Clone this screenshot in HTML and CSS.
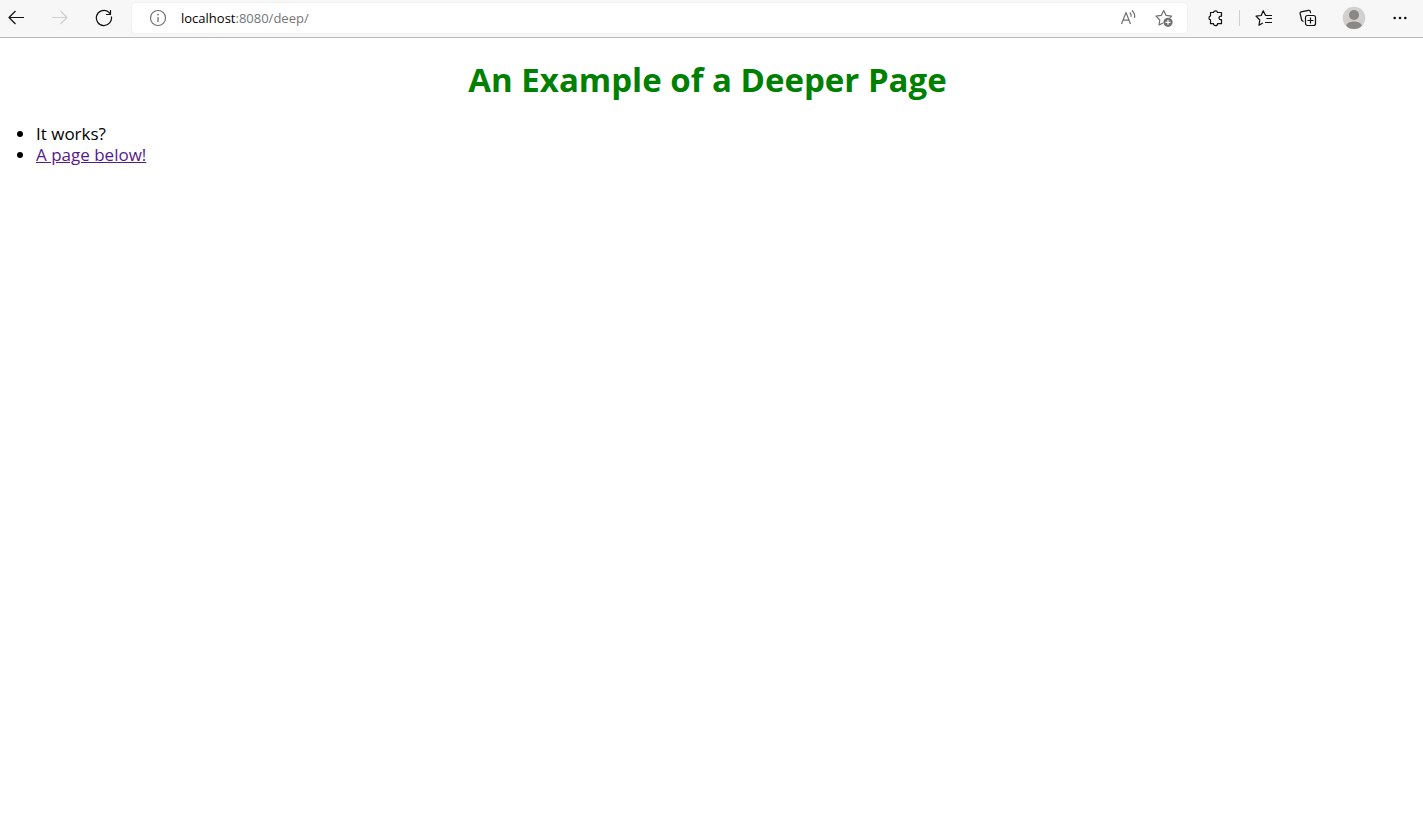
FILE: index.html
```html
<!DOCTYPE html>
<html lang="en">
<head>
<meta charset="utf-8">
<title>An Example of a Deeper Page</title>
<link rel="stylesheet" href="styles.css">
</head>
<body>
<header class="toolbar">
  <button class="tool" aria-label="Back"><svg width="18" height="18" viewBox="0 0 18 18"><path d="M17 8.500H1.500M8.500 2L2 8.500 8.500 15"/></svg></button>
  <button class="tool" aria-label="Forward" disabled><svg width="18" height="18" viewBox="0 0 18 18"><path d="M1 8.500h15.500M9.500 2L16 8.500 9.500 15"/></svg></button>
  <button class="tool" aria-label="Reload"><svg width="18" height="18" viewBox="0 0 18 18"><path d="M16.400 7.500A7.600 7.600 0 1 1 12.800 2.400L15.500 5M15.500 1v4.500H11"/></svg></button>
  <form class="address">
    <button type="button" class="tool muted" aria-label="Site information"><svg width="18" height="18" viewBox="0 0 18 18"><circle cx="9" cy="9" r="7.500"/><path d="M9 8v5" stroke-width="1.300"/><circle class="fill" cx="9" cy="5.600" r=".9"/></svg></button>
    <div class="url" role="textbox" aria-label="Address" tabindex="0">localhost<span class="path">:8080/deep/</span></div>
    <button type="button" class="tool muted" aria-label="Read aloud"><svg width="18" height="18" viewBox="0 0 18 18"><path d="M2.500 15L7 3.500 11.500 15M4 11.200h6M10.800 3.500q1.700 1.800 1.400 4.200M12.900 1.500q3.500 3 2.600 7.300"/></svg></button>
    <button type="button" class="tool muted" aria-label="Add to favorites"><svg width="18" height="18" viewBox="0 0 18 18"><path d="M7.800 14.100L4 16l.8-5L1 7.200l5.300-.8L8.700 1.500l2.400 4.900 5.400.8-1.700 1.500"/><circle class="fill" cx="13" cy="13.300" r="4.600"/><path class="plus" d="M13 10.800v5M10.500 13.300h5"/></svg></button>
  </form>
  <div class="extensions">
    <button class="tool" aria-label="Extensions"><svg width="18" height="18" viewBox="0 0 18 18"><path d="M4.500 3.500h3a2.100 2.100 0 0 1 4.100 0H15.500v3.700c-3-.7-3.600 4 0 3.500v4H11.500a2 2 0 0 1-4 0H4.500v-3.800a2 2 0 0 1 0-3.900z"/></svg></button>
    <span class="divider"></span>
    <button class="tool" aria-label="Favorites"><svg width="18" height="18" viewBox="0 0 18 18"><path d="M7.800 14L4 16.200 4.800 11 1 7.200l5.200-.7L8.200 1.700l2.400 4.800H17M11.500 9.500H17M10 13.500h7"/></svg></button>
  </div>
  <button class="tool" aria-label="Collections"><svg width="18" height="18" viewBox="0 0 18 18"><path d="M4.500 12.500L2.800 11.500 1.100 4.500q-.3-1.300 1-1.600L9.500 1.300q1.300-.3 1.700 1l.5 1.900"/><rect x="6.500" y="6.500" width="10" height="10" rx="2"/><path d="M11.500 8.500v6M8.500 11.500h6"/></svg></button>
  <div class="account">
    <button class="tool" aria-label="Profile"><svg class="avatar" width="24" height="24" viewBox="0 0 24 24"><circle cx="12" cy="12" r="11.300" fill="#d2d0ce"/><circle cx="12" cy="9" r="5" fill="#8a8886"/><path d="M4 19.500Q6 15.500 12 15.500T20 19.500Q17 23 12 23T4 19.500z" fill="#8a8886"/></svg></button>
    <button class="tool" aria-label="Settings and more"><svg width="18" height="18" viewBox="0 0 18 18"><g class="fill"><circle cx="3.700" cy="9" r="1.300"/><circle cx="9" cy="9" r="1.300"/><circle cx="14.300" cy="9" r="1.300"/></g></svg></button>
  </div>
</header>
<main class="page">
  <h1 class="title">An Example of a Deeper Page</h1>
  <ul class="list">
    <li>It works?</li>
    <li><a class="link" href="#below">A page below!</a></li>
  </ul>
</main>
</body>
</html>
```
FILE: styles.css
```css
body {
  margin: 0;
  background: #fff;
  color: #000;
  font-family: "Open Sans", "Noto Sans", sans-serif;
}

.toolbar {
  display: flex;
  align-items: center;
  gap: 12px;
  padding: 3px 7px 4px 0;
  background: #f7f7f7;
  border-bottom: 1px solid #b9b9b9;
}

.tool {
  display: flex;
  flex: none;
  align-items: center;
  justify-content: center;
  width: 32px;
  height: 30px;
  padding: 0;
  border: 0;
  background: none;
  color: #111;
}

.tool:disabled {
  color: #cfcfcf;
}

.tool svg {
  fill: none;
  stroke: currentColor;
  stroke-width: 1.2;
  stroke-linejoin: round;
}

.tool .fill {
  fill: currentColor;
  stroke: none;
}

.tool .plus {
  stroke: #fff;
}

.tool .avatar {
  stroke: none;
}

.tool.muted {
  color: #707070;
}

.address {
  display: flex;
  flex: 1;
  align-items: center;
  gap: 4px;
  min-width: 0;
  margin: 0;
  padding: 0 7px 0 10px;
  border-radius: 4px;
  background: #fff;
  box-shadow: 0 0 2px #e4e4e4;
}

.url {
  flex: 1;
  min-width: 0;
  padding-left: 3px;
  overflow: hidden;
  font-size: 13px;
  line-height: 20px;
  white-space: nowrap;
}

.path {
  color: #767676;
}

.extensions {
  display: flex;
  align-items: center;
  gap: 8px;
}

.divider {
  width: 1px;
  height: 16px;
  background: #d0d0d0;
}

.account {
  display: flex;
  gap: 14px;
  padding-left: 2px;
}

.page {
  padding: 19px 12px 20px 4px;
}

.title {
  margin: 0 0 20px;
  color: #008000;
  font-size: 33px;
  font-weight: 700;
  line-height: 46px;
  text-align: center;
}

.list {
  margin: 0;
  padding-left: 32px;
  font-size: 17px;
  line-height: 21px;
}

.link {
  color: #551a8b;
}
```
